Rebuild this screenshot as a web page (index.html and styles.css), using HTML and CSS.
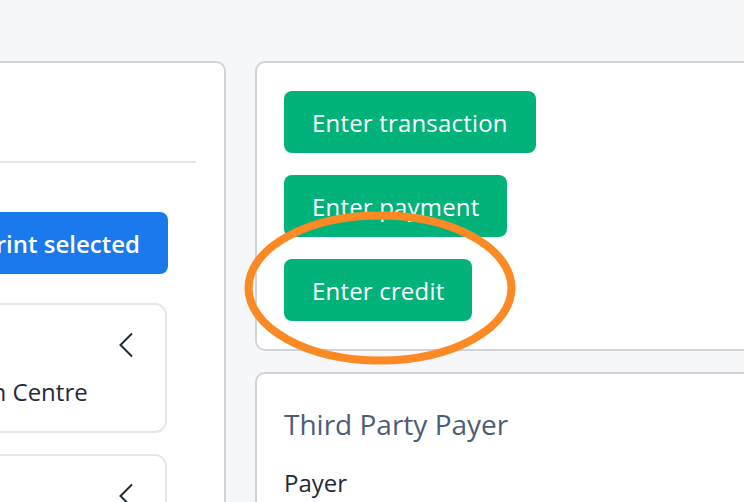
FILE: index.html
```html
<!DOCTYPE html>
<html lang="en">
<head>
<meta charset="utf-8">
<title>Account</title>
<link rel="stylesheet" href="styles.css">
</head>
<body>
<div class="page">
  <section class="card left-card">
    <div class="left-head">
      <h2 class="left-title">Statements</h2>
    </div>
    <div class="divider"></div>
    <div class="toolbar">
      <button class="btn btn-blue">Print selected</button>
    </div>
    <div class="list">
      <div class="item">
        <div class="item-head">
          <span class="item-date">12/04/2023</span>
          <svg class="chev" width="16" height="26" viewBox="0 0 16 26"><path d="M14 1.5 L2.5 13 L14 24.5" fill="none" stroke="#1f2937" stroke-width="2"/></svg>
        </div>
        <div class="item-name">Wellington Centre</div>
      </div>
      <div class="item">
        <div class="item-head">
          <span class="item-date">03/03/2023</span>
          <svg class="chev" width="16" height="26" viewBox="0 0 16 26"><path d="M14 1.5 L2.5 13 L14 24.5" fill="none" stroke="#1f2937" stroke-width="2"/></svg>
        </div>
        <div class="item-name">Wellington Centre</div>
      </div>
    </div>
  </section>
  <div class="right-col">
    <section class="card actions">
      <button class="btn btn-green">Enter transaction</button>
      <button class="btn btn-green">Enter payment</button>
      <button class="btn btn-green">Enter credit</button>
    </section>
    <section class="card tpp">
      <h3 class="tpp-title">Third Party Payer</h3>
      <div class="tpp-label">Payer</div>
    </section>
  </div>
</div>
<svg class="annot" width="290" height="170" viewBox="0 0 290 170"><ellipse cx="145" cy="85" rx="131.5" ry="72.5" fill="none" stroke="#fc8924" stroke-width="8"/></svg>
</body>
</html>
```

FILE: styles.css
```css
* { box-sizing: border-box; }
html, body { margin: 0; padding: 0; }
body {
  background: #f6f7f9;
  font-family: "Open Sans", "Noto Sans", sans-serif;
  color: #1f2a3a;
  overflow: hidden;
  width: 744px;
  height: 502px;
  position: relative;
}
.page {
  display: grid;
  grid-template-columns: 426px 1fr;
  column-gap: 29px;
  margin-left: -200px;
  margin-right: -40px;
  padding-top: 61px;
}
.card {
  background: #fff;
  border: 2px solid #d0d4da;
  border-radius: 10px;
}
.left-card {
  height: 520px;
}
.left-head {
  height: 98px;
  padding: 24px 28px;
}
.left-title {
  margin: 0;
  font-size: 28px;
  font-weight: 400;
  color: #4b5e76;
  visibility: hidden;
}
.divider {
  height: 2px;
  background: #e4e6ea;
  margin: 0 28px 0 28px;
}
.toolbar {
  display: flex;
  justify-content: flex-end;
  margin-top: 49px;
  padding-right: 56px;
}
.btn {
  border: none;
  border-radius: 8px;
  color: #fff;
  font-family: "Open Sans", "Noto Sans", sans-serif;
  font-size: 24px;
  line-height: 34px;
  height: 62px;
  padding: 2px 28px 0;
}
.btn-blue {
  background: #1a7aed;
  font-weight: 600;
}
.btn-green {
  background: #01b27b;
  font-weight: 400;
  letter-spacing: 0.18px;
}
.list {
  display: flex;
  flex-direction: column;
  gap: 21px;
  margin-top: 29px;
  padding: 0 57px 0 28px;
}
.item {
  border: 2px solid #e6e7eb;
  border-radius: 12px;
  height: 130px;
  padding: 26px 31px 0 55px;
}
.item-head {
  display: flex;
  justify-content: space-between;
  align-items: flex-start;
  height: 30px;
}
.item-date {
  font-size: 24px;
  visibility: hidden;
}
.chev { display: block; margin-top: 1px; }
.item-name {
  margin-top: 15px;
  font-size: 24px;
  line-height: 32px;
  color: #1f2a3a;
}
.right-col {
  display: flex;
  flex-direction: column;
  gap: 21px;
}
.actions {
  display: flex;
  flex-direction: column;
  align-items: flex-start;
  gap: 22px;
  padding: 28px 27px 28px;
}
.tpp {
  height: 200px;
  padding: 31px 27px;
}
.tpp-title {
  margin: 0;
  font-size: 28px;
  font-weight: 400;
  line-height: 38px;
  color: #4b5e76;
}
.tpp-label {
  margin-top: 24px;
  font-size: 24px;
  line-height: 32px;
  color: #1f2a3a;
}
.annot {
  position: absolute;
  left: 235px;
  top: 203px;
}
```
